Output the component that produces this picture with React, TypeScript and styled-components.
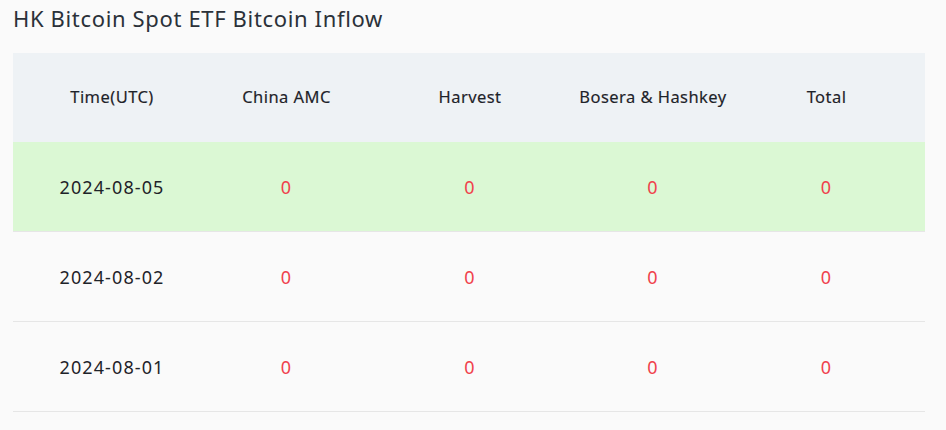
import React from "react";
import styled, { createGlobalStyle } from "styled-components";

const Global = createGlobalStyle`
  html, body { margin: 0; padding: 0; background: #fafafa; }
  body { font-family: "Noto Sans", "Open Sans", sans-serif; color: #1e2329; }
`;

const Page = styled.div`
  padding: 0 21px 0 13px;
  background: #fafafa;
  min-height: 430px;
  box-sizing: border-box;
`;

const Title = styled.h2`
  margin: 0;
  height: 53px;
  padding-top: 3px;
  box-sizing: border-box;
  font-size: 22px;
  font-weight: 400;
  letter-spacing: 0.65px;
  line-height: 30px;
  color: #2b3139;
`;

const Table = styled.div`
  display: flex;
  flex-direction: column;
`;

const cols = "198px 151px 216px 150px 1fr";

const HeadRow = styled.div`
  display: grid;
  grid-template-columns: ${cols};
  height: 89px;
  padding-bottom: 2px;
  box-sizing: border-box;
  align-items: center;
  background: #eef2f5;
`;

const Row = styled.div<{ $highlight?: boolean }>`
  display: grid;
  grid-template-columns: ${cols};
  height: 90px;
  align-items: center;
  background: ${(p) => (p.$highlight ? "#dbf8d4" : "transparent")};
  border-bottom: 1px solid #e6e6e6;
  box-sizing: border-box;
  &:first-child { border-top: 1px solid #e6e6e6; }
`;

const Th = styled.div`
  text-align: center;
  font-size: 16.5px;
  font-weight: 400;
  letter-spacing: 0.45px;
  color: #1e2329;
  -webkit-text-stroke: 0.15px #1e2329;
`;

const Td = styled.div<{ $red?: boolean }>`
  text-align: center;
  font-size: 18px;
  letter-spacing: 1.1px;
  color: ${(p) => (p.$red ? "#f0414c" : "#1e2329")};
`;

const headers = ["Time(UTC)", "China AMC", "Harvest", "Bosera & Hashkey", "Total"];
const rows = [
  { date: "2024-08-05", vals: ["0", "0", "0", "0"], hl: true },
  { date: "2024-08-02", vals: ["0", "0", "0", "0"], hl: false },
  { date: "2024-08-01", vals: ["0", "0", "0", "0"], hl: false },
];

export default function App() {
  return (
    <>
      <Global />
      <Page>
        <Title>HK Bitcoin Spot ETF Bitcoin Inflow</Title>
        <Table>
          <HeadRow>
            {headers.map((h) => (
              <Th key={h}>{h}</Th>
            ))}
          </HeadRow>
          {rows.map((r) => (
            <Row key={r.date} $highlight={r.hl}>
              <Td>{r.date}</Td>
              {r.vals.map((v, i) => (
                <Td key={i} $red>
                  {v}
                </Td>
              ))}
            </Row>
          ))}
        </Table>
      </Page>
    </>
  );
}
